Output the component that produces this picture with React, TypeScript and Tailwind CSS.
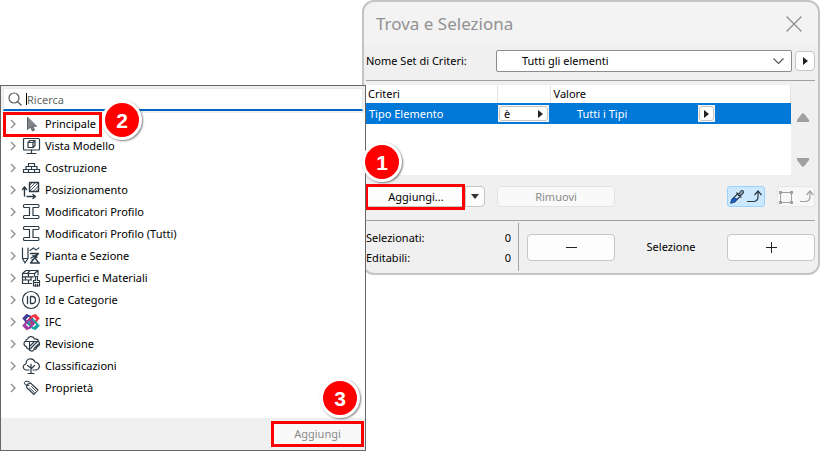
import type { ReactNode } from "react";

const INK = "#2b3a45";

function Icon({ children }: { children: ReactNode }) {
  return (
    <svg
      viewBox="0 0 20 20"
      className="h-5 w-5 shrink-0"
      fill="none"
      stroke={INK}
      strokeWidth="1.2"
      strokeLinecap="round"
      strokeLinejoin="round"
      aria-hidden="true"
    >
      {children}
    </svg>
  );
}

const CursorIcon = () => (
  <Icon>
    <path d="M6.500 3.500v12l3-2.500 2 4 2-1-1.800-3.800h3.500z" fill="#858585" stroke="#55606a" strokeWidth="1" />
  </Icon>
);

const ModelViewIcon = () => (
  <Icon>
    <path d="M3.500 2.500h14q1 0 1 1v9.500q0 1-1 1h-14q-1 0-1-1v-9.500q0-1 1-1z" />
    <path d="M7 6.500h5v5H7zM7 6.500 9 4.500h5v5l-2 2M12 6.500l2-2M10.500 14v3.500M6 17.500h9" />
  </Icon>
);

const BricksIcon = () => (
  <Icon>
    <path d="M7.500 5.500h6v3h-6zM5 8.500h5.500v3H5zM10.500 8.500H16v3h-5.500zM2.500 11.500h5v3h-5zM7.500 11.500h6v3h-6zM13.500 11.500h5v3h-5z" />
  </Icon>
);

const PositionIcon = () => (
  <Icon>
    <path d="M8.500 2.500h9v9h-9z" strokeWidth="1.400" />
    <path d="M9 5l2.500-2.500M9 8l5.500-5.500M9 11l8.500-8.500M12 11.500l5.500-5.500M15 11.500l2.500-2.500" strokeWidth="0.900" />
    <path d="M3.500 16V7M1.500 9.500l2-2.500 2 2.500M6 16.500h8M12 14.500l2.500 2-2.500 2" strokeWidth="1.400" />
  </Icon>
);

const ProfileIcon = () => (
  <Icon>
    <path d="M3.500 2.500h13.500q1 0 1 1.500t-1 1.500h-5v8h5q1 0 1 1.500t-1 1.500H3.500q-1 0-1-1.500t1-1.500h5v-8h-5q-1 0-1-1.500t1-1.500z" />
  </Icon>
);

const PlanIcon = () => (
  <Icon>
    <path d="M1.500 2v10.500l2.500 4.500 3-4.500V2M1.500 12.500H7" />
    <path d="M9 4.500l3.500-2.500 2.500 2 3.500-2.500" strokeDasharray="2 1" />
    <path d="M9.500 7.500h8L9.500 17h9M12 9.500l5.500 7M10 12l7-4M11 14l5-3" strokeWidth="1.300" />
  </Icon>
);

const SurfaceIcon = () => (
  <Icon>
    <path d="M1.500 5.500 5 2.500h12V7M1.500 5.500h12V8M13.500 5.500l3.500-3M1.500 5.500v10h9M1.500 8.800h11M1.500 12h9M7.500 5.500v3.300M4.500 8.800V12M10 8.800V12M7.500 12v3.500M9 2.500 6.500 5.500" />
    <path d="M12.500 12.500h2V8.500h2v4h2v5.500h-6z" fill="#fff" />
    <path d="M12.500 14.500h6M14.500 16v2M16.500 16v2" />
  </Icon>
);

const IdIcon = () => (
  <Icon>
    <circle cx="10" cy="10" r="8.500" />
    <path d="M6.500 6.500v7M9.500 6.500v7h1.500q3.500 0 3.500-3.500t-3.500-3.500z" strokeWidth="1.300" />
  </Icon>
);

const IfcIcon = () => (
  <Icon>
    <g strokeWidth="2.200" transform="rotate(45 10 10)">
      <rect x="3.500" y="7" width="7.500" height="6" rx="1.500" stroke="#3b3f97" />
      <rect x="7" y="2.500" width="6" height="7.500" rx="1.500" stroke="#ef3340" transform="translate(0 1)" />
      <rect x="9" y="7" width="7.500" height="6" rx="1.500" stroke="#1aa3a3" />
      <rect x="7" y="9" width="6" height="7.500" rx="1.500" stroke="#a13aa0" />
    </g>
    <path d="M2.500 6.500 6 3" stroke="#3b3f97" strokeWidth="2.200" />
    <path d="M14 3l3.500 3.500" stroke="#ef3340" strokeWidth="2.200" />
    <path d="M17.500 13.500 14 17" stroke="#1aa3a3" strokeWidth="2.200" />
    <path d="M2.500 13.500 6 17" stroke="#a13aa0" strokeWidth="2.200" />
  </Icon>
);

const RevisionIcon = () => (
  <Icon>
    <path d="M6.500 5q1-2.700 4-2.300 2.300.300 2.800 2.300 4-.500 4.200 2.500 1.500 1 1 3-.500 2-2.500 2.200-.500 3-3 2.800-1 2-3 1.500-2-.500-2-2-2.500 0-2.500-2.500-2.500-.500-2.500-2.800 0-2 1.500-2.200.500-2.500 2-2.500z" />
    <path d="M4 7.500h4.500V15M8.500 7.500h8.500M9 12l4.500-4.500M9 15l7.500-7.500M13 14.500l4.500-4.500" strokeWidth="1.100" />
  </Icon>
);

const TreeIcon = () => (
  <Icon>
    <path d="M8 14H5q-2.500-.500-2.800-3 .300-2.500 2.800-3Q5 4 8 3q4.500-1 6 3 4 .500 4.500 4.500-.500 3-3.500 3.500h-3" />
    <path d="M10 17.500V8M10 12 6.500 9.500M10 13l3.500-3.500M7 17.500h6" />
  </Icon>
);

const TagIcon = () => (
  <Icon>
    <path d="M5.500 9.500 6 6.500l3.500-1.500 7.500 7-4 4.500z" strokeWidth="1.100" />
    <path d="M8.500 10l5 4.500M10.500 8.500l4.500 4.500" strokeWidth="0.900" />
    <path d="M8 7.500Q5.500 8 4 6.500 2.500 4.500 4 3.500t4.500.500" strokeWidth="1" />
  </Icon>
);

const CATEGORIES: { label: string; Glyph: () => ReactNode }[] = [
  { label: "Principale", Glyph: CursorIcon },
  { label: "Vista Modello", Glyph: ModelViewIcon },
  { label: "Costruzione", Glyph: BricksIcon },
  { label: "Posizionamento", Glyph: PositionIcon },
  { label: "Modificatori Profilo", Glyph: ProfileIcon },
  { label: "Modificatori Profilo (Tutti)", Glyph: ProfileIcon },
  { label: "Pianta e Sezione", Glyph: PlanIcon },
  { label: "Superfici e Materiali", Glyph: SurfaceIcon },
  { label: "Id e Categorie", Glyph: IdIcon },
  { label: "IFC", Glyph: IfcIcon },
  { label: "Revisione", Glyph: RevisionIcon },
  { label: "Classificazioni", Glyph: TreeIcon },
  { label: "Proprietà", Glyph: TagIcon },
];

function Highlight({ className }: { className: string }) {
  return <span className={`pointer-events-none absolute border-[3px] border-[#ff0000] ${className}`} />;
}

function Step({ n, className }: { n: number; className: string }) {
  return (
    <span
      className={`pointer-events-none absolute z-20 flex h-10 w-10 items-center justify-center rounded-full border-[3px] border-white bg-[#ff0000] font-['Liberation_Sans',sans-serif] text-[21px] leading-none font-bold text-white shadow-[1px_1px_2px_rgba(0,0,0,0.5)] ${className}`}
    >
      {n}
    </span>
  );
}

function RightTriangle() {
  return (
    <svg viewBox="0 0 5 8" className="h-2 w-[5px] shrink-0" aria-hidden="true">
      <path d="M0 0v8l5-4z" fill="#222" />
    </svg>
  );
}

function CriteriaPicker() {
  return (
    <section className="relative z-10 mt-[85px] flex w-[366px] shrink-0 flex-col border border-[#666] bg-white">
      <div className="bg-[#f0f0f0] p-0.5">
        <label className="flex h-[23px] items-center border-x border-t border-b-2 border-x-[#e3ebf1] border-t-[#e3ebf1] border-b-[#0067c0] bg-white pl-1">
          <svg viewBox="0 0 14 14" className="h-3.5 w-3.5 shrink-0" fill="none" stroke="#5c5c5c" strokeWidth="1.200" aria-hidden="true">
            <circle cx="6" cy="6" r="5" />
            <path d="M9.500 9.500 13.500 13.500" />
          </svg>
          <span className="ml-1 h-3 w-px bg-black" />
          <input
            type="text"
            aria-label="Ricerca"
            placeholder="Ricerca"
            className="h-5 min-w-0 flex-1 bg-transparent text-[11px] text-black outline-none placeholder:text-[#666]"
          />
        </label>
      </div>
      <ul className="grow">
        {CATEGORIES.map(({ label, Glyph }, i) => (
          <li key={label} className="relative">
            <button type="button" className="flex h-[22px] w-full items-center pl-2 text-left">
              <svg viewBox="0 0 8 10" className="mr-1 h-2.5 w-2 shrink-0" fill="none" stroke="#8c8c8c" strokeWidth="1.300" aria-hidden="true">
                <path d="M2 1l4 4-4 4" />
              </svg>
              <Glyph />
              <span className="ml-1">{label}</span>
            </button>
            {i === 0 && (
              <>
                <Highlight className="-top-px left-0.5 h-[25px] w-[99px]" />
                <Step n={2} className="-top-[13px] left-[101px]" />
              </>
            )}
          </li>
        ))}
      </ul>
      <footer className="mt-[19px] flex h-8 items-center justify-end bg-[#f0f0f0] pr-[3px]">
        <div className="relative">
          <button type="button" disabled className="h-6 w-[89px] bg-[#f9f9f9] text-[#8a8a8a]">
            Aggiungi
          </button>
          <Highlight className="-inset-x-0.5 -inset-y-px" />
          <Step n={3} className="-top-11 left-[47px]" />
        </div>
      </footer>
    </section>
  );
}

function CriteriaTable() {
  return (
    <div className="mt-1 flex h-[90px]">
      <div className="grow bg-white">
        <table className="w-full table-fixed border-collapse text-left">
          <colgroup>
            <col className="w-[131px]" />
            <col className="w-[53px]" />
            <col />
          </colgroup>
          <thead>
            <tr className="h-[18px]">
              <th className="border-r border-[#e2e2e2] p-0 pl-0.5 font-normal">Criteri</th>
              <th className="border-r border-[#e2e2e2] p-0" aria-label="Operatore" />
              <th className="border-r border-[#e2e2e2] p-0 pl-[3px] font-normal">Valore</th>
            </tr>
          </thead>
          <tbody>
            <tr className="h-[21px] bg-[#0078d7] text-white">
              <td className="p-0 pl-[3px]">Tipo Elemento</td>
              <td className="p-0 pl-px">
                <span className="flex h-[17px] w-[51px] bg-[#f3f3f3] p-px">
                  <button type="button" className="flex grow items-center justify-between rounded-[3px] border border-[#c6c6c6] bg-white px-1 leading-none text-black">
                    è
                    <RightTriangle />
                  </button>
                </span>
              </td>
              <td className="p-0">
                <span className="flex items-center pl-[27px]">
                  <span className="w-[121px]">Tutti i Tipi</span>
                  <span className="flex h-[17px] w-[17px] bg-[#f3f3f3] p-px">
                    <button type="button" aria-label="Scegli valore" className="flex grow items-center justify-center rounded-[3px] border border-[#c6c6c6] bg-white">
                      <RightTriangle />
                    </button>
                  </span>
                </span>
              </td>
            </tr>
          </tbody>
        </table>
      </div>
      <div className="flex w-6 shrink-0 flex-col items-center justify-between pt-7 pb-2">
        <button type="button" aria-label="Su">
          <svg viewBox="0 0 12 9" className="h-[9px] w-3">
            <path d="M5 .500h2L12 7v2H0V7z" fill="#a0a0a0" />
          </svg>
        </button>
        <button type="button" aria-label="Giù">
          <svg viewBox="0 0 12 9" className="h-[9px] w-3">
            <path d="M5 8.500h2L12 2V0H0v2z" fill="#a0a0a0" />
          </svg>
        </button>
      </div>
    </div>
  );
}

function FindDialog() {
  return (
    <section className="relative -ml-1 min-w-0 grow self-start rounded-xl border-2 border-[#c4c4c4] bg-[#f0f0f0]">
      <header className="flex h-[43px] items-center justify-between rounded-t-xl bg-[#f3f3f3] pr-4 pl-3">
        <h1 className="text-[17px] text-[#919191]">Trova e Seleziona</h1>
        <button type="button" aria-label="Chiudi">
          <svg viewBox="0 0 16 16" className="h-4 w-4" stroke="#8f8f8f" strokeWidth="1.300" fill="none">
            <path d="M.500.500l15 15M15.500.500l-15 15" />
          </svg>
        </button>
      </header>
      <div className="pt-[5px] pr-[3px] pb-0.5 pl-0.5">
        <div className="flex h-[22px] items-center">
          <label htmlFor="criteria-set" className="w-[130px] shrink-0">
            Nome Set di Criteri:
          </label>
          <div className="relative grow">
            <select
              id="criteria-set"
              className="block h-[22px] w-full appearance-none rounded-[2px] border border-[#8c8c8c] bg-white pl-[25px] text-[11px] text-black"
            >
              <option>Tutti gli elementi</option>
            </select>
            <svg viewBox="0 0 11 7" className="pointer-events-none absolute top-2 right-2 h-[7px] w-[11px]" fill="none" stroke="#555" strokeWidth="1.200" aria-hidden="true">
              <path d="M.500.500l5 5 5-5" />
            </svg>
          </div>
          <button type="button" aria-label="Opzioni set" className="ml-[3px] flex h-5 w-5 items-center justify-center rounded border border-[#c6c6c6] bg-white">
            <RightTriangle />
          </button>
        </div>
        <hr className="mt-2 border-[#a0a0a0]" />
        <CriteriaTable />
        <div className="relative mt-[11px] flex h-[21px]">
          <button type="button" className="w-[99px] rounded-l border border-r-0 border-[#c6c6c6] bg-[#fdfdfd]">
            Aggiungi...
          </button>
          <button type="button" aria-label="Altre opzioni" className="flex w-5 items-center justify-center rounded-r border border-[#c6c6c6] bg-[#fdfdfd]">
            <svg viewBox="0 0 8 5" className="h-[5px] w-2">
              <path d="M0 0h8L4 5z" fill="#333" />
            </svg>
          </button>
          <Highlight className="-top-0.5 -left-px h-[26px] w-[100px]" />
          <Step n={1} className="-top-11 -left-1" />
          <button type="button" disabled className="ml-3 w-[118px] rounded border border-[#e3e3e3] bg-[#f9f9f9] text-[#8a8a8a]">
            Rimuovi
          </button>
          <button type="button" aria-label="Preleva parametri" className="ml-auto flex w-[38px] items-center justify-between rounded-[3px] border border-[#99d1ff] bg-[#cce8ff] px-px">
            <svg viewBox="0 0 16 16" className="h-4 w-4" fill="none" stroke={INK} strokeWidth="1.100" strokeLinejoin="round">
              <path d="M2 14l1-3.500 5.500-5.500L11 7.500 5.500 13z" fill="#cce8ff" />
              <path d="M2 14l.800-3 2-2L8 10l-2.500 3z" fill="#1767d2" stroke="#1c4f96" />
              <path d="M7.500 3.500l5 5M9.500 5.500l2.500-3.500q1.500-1 2.200 0t0 2l-3.200 3" fill="#9fb1bd" />
            </svg>
            <svg viewBox="0 0 16 13" className="h-[13px] w-4" fill="none" stroke={INK} strokeWidth="1.200">
              <path d="M0 11.500h7q4-.500 4-5V1.500M7.500 5l3.500-4 3.500 4" />
            </svg>
          </button>
          <button type="button" disabled aria-label="Preleva da area" className="ml-3 flex w-[38px] items-center justify-between rounded-[3px] border border-[#e6e6e6] bg-[#f7f7f7]">
            <svg viewBox="0 0 16 16" className="h-4 w-4 shrink-0" fill="none" stroke="#a0a0a0">
              <path d="M2.500 3.500h11v10h-11z" />
              <path d="M1 2h3v3H1zM12 2h3v3h-3zM1 12h3v3H1zM12 12h3v3h-3z" fill="#a0a0a0" stroke="none" />
            </svg>
            <svg viewBox="0 0 14 13" className="h-[13px] w-3.5" fill="none" stroke="#a0a0a0" strokeWidth="1.200">
              <path d="M0 11.500h6q4-.500 4-5V1.500M6.500 5 10 1l3.500 4" />
            </svg>
          </button>
        </div>
        <hr className="mt-[13px] border-[#a0a0a0]" />
        <div className="mt-0.5 flex h-12 items-center">
          <dl className="grid h-full w-[153px] shrink-0 grid-cols-[1fr_auto] content-center border-r border-[#a0a0a0] pt-0.5 pr-[7px] leading-5">
            <dt>Selezionati:</dt>
            <dd>0</dd>
            <dt>Editabili:</dt>
            <dd>0</dd>
          </dl>
          <button type="button" aria-label="Rimuovi dalla selezione" className="ml-2 flex h-[27px] w-[88px] items-center justify-center rounded border border-[#c6c6c6] bg-[#fdfdfd]">
            <span className="h-px w-[11px] bg-[#222]" />
          </button>
          <span className="grow text-center">Selezione</span>
          <button type="button" aria-label="Aggiungi alla selezione" className="flex h-[27px] w-[88px] items-center justify-center rounded border border-[#c6c6c6] bg-[#fdfdfd]">
            <svg viewBox="0 0 11 11" className="h-[11px] w-[11px]" stroke="#222">
              <path d="M5.500 0v11M0 5.500h11" />
            </svg>
          </button>
        </div>
      </div>
    </section>
  );
}

export default function App() {
  return (
    <main className="flex min-h-screen bg-white font-['Noto_Sans','Open_Sans',sans-serif] text-[11px] leading-4 text-black">
      <CriteriaPicker />
      <FindDialog />
    </main>
  );
}
